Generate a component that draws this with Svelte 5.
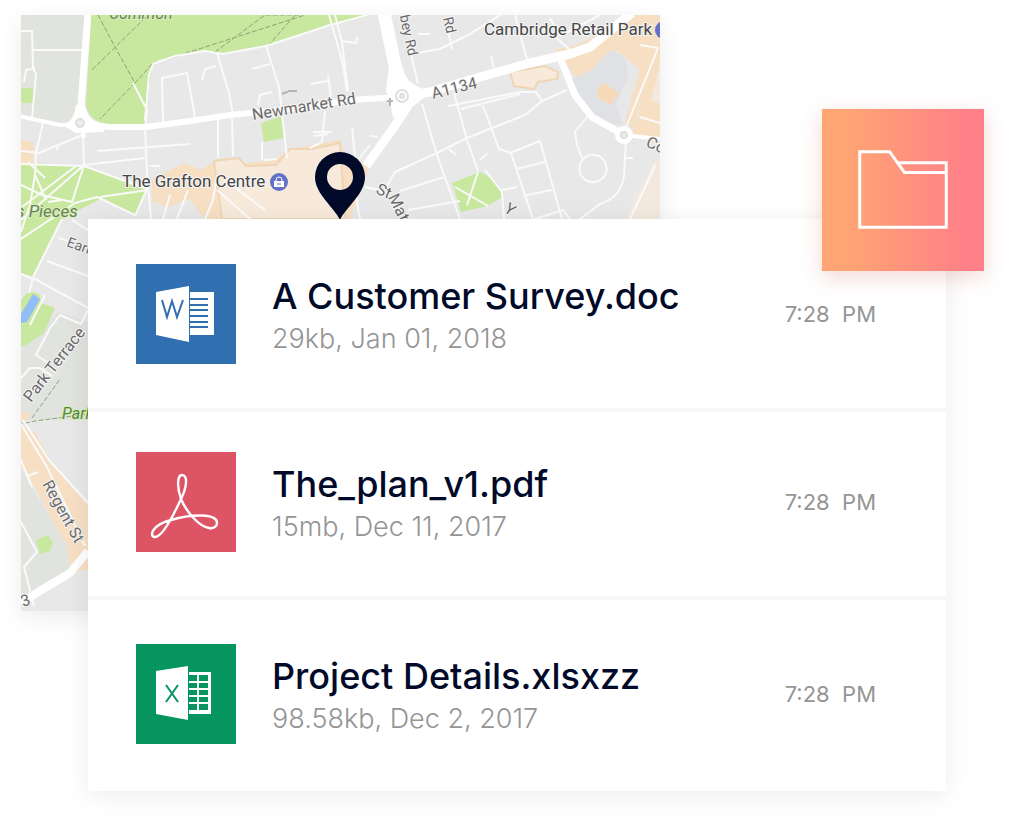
<script>
  const files = [
    { kind: 'word', name: 'A Customer Survey.doc', meta: '29kb, Jan 01, 2018', time: '7:28\u00a0 PM' },
    { kind: 'pdf', name: 'The_plan_v1.pdf', meta: '15mb, Dec 11, 2017', time: '7:28\u00a0 PM' },
    { kind: 'excel', name: 'Project Details.xlsxzz', meta: '98.58kb, Dec 2, 2017', time: '7:28\u00a0 PM' }
  ];
</script>

<main class="scene">
  <svg class="map" viewBox="21 15 639 596" preserveAspectRatio="xMinYMin slice" aria-label="Map">
    <rect x="21" y="15" width="639" height="596" fill="#e8e8e8" />
    <path fill="#e1e3df" d="M21 15H88L80 118 60 124 21 116ZM58 312 88 322V420H21V350ZM21 470 52 520 67 545 70 572 21 600Z" />

    <!-- parks -->
    <g fill="#c8e79f">
      <path d="M91 15 86 105Q88 121 108 124H146L148 90 152 68 158 60 200 51 223 54 265 47 330 25 373 15Z" />
      <path d="M21 88H33V103H21Z" />
      <path d="M21 162 84 166 147 189 135 215 102 198 62 219 33 277 21 273Z" />
      <path d="M261 123 281 116 284 138 264 142Z" />
      <path d="M452 183 480 172Q495 178 503 197L487 206 461 212Z" />
      <path d="M21 300Q30 287 40 295L41 303 55 308 44 333 21 348Z" />
      <path d="M36 540 48 535 53 543 50 551 40 554Z" />
    </g>
    <path fill="#93bdf6" d="M33 294 40 299 27 322 21 323V314Z" />

    <!-- commercial areas -->
    <g fill="#f6dfc3">
      <path d="M21 140 34 142 33 163H21Z" />
      <path d="M152 180 170 170 185 163 200 170 216 161 225 158 245 163 275 160 290 149 340 140 345 158 370 165 350 219H205L190 199 168 207 152 201Z" />
      <path d="M555 50 580 44 630 15H660V145L632 133 640 110 655 55 640 44 625 40 590 55 566 64Z" />
      <path d="M563 60 600 47 632 38 656 48 650 80 632 129 625 122 640 70 617 50 578 80Z" />
      <path d="M21 425 36 433 50 461 74 490 88 505V570L70 572 67 545 52 520 35 487 21 466Z" />
      <path d="M21 411 31 414 26 422H21Z" />
    </g>
    <g fill="#f7eadb" stroke="#efd5b4" stroke-width="2">
      <path d="M214 161 239 158 246 166 276 165 290 149 312 149 340 143 345 219H222Z" />
      <path d="M510 72 545 66 558 72 557 79 538 82 534 89 514 86Z" />
    </g>
    <path fill="#f3e9de" d="M660 155 650 168 625 219H660ZM660 65 651 100 660 104Z" />
    <path fill="#dfe1e5" d="M570 80 592 70 610 50 625 57 629 75 616 104 622 124 608 124 594 118 582 106Z" />
    <path fill="#f6d9b8" d="M598 87 604 83 619 93 611 105 597 97Z" />

    <g class="dash">
      <path d="M98 15 114 45 135 83 100 119M152 64 305 15M92 70 148 15M152 64 135 83M215 52 265 15H300M268 46 295 15M18 425 35 421 88 414M32 418 60 379" />
    </g>

    <!-- minor streets -->
    <g class="road minor">
      <path d="M21 31H32L33 68 36 74 32 118M24 82 26 70 35 68M33 50H82M21 151 39 153 85 134M43 123 36 153 35 175 46 200M83 134 84 165M21 164 84 166 147 189 135 216M60 143 56 150" />
      <path d="M84 165 21 220M76 166 22 207M45 178 28 162M84 165 72 202 42 195 21 185M21 239 75 203 97 197 135 215M48 202 62 200M35 175 30 205 21 232M100 197 148 190" />
      <path d="M133 83 147 110 145 128 147 172 151 219M145 120 149 75 153 64 175 56 205 51 223 54 266 46 330 25 375 13M163 123 162 78 187 73 195 117M202 80 205 69 216 66M205 51 217 53 229 93 233 115M97 151 190 144M84 165 145 158" />
      <path d="M218 116V158M232 116 233 156M258 105 260 95 272 92M262 142V160M252 69 270 64M266 46 279 87 287 158M264 160 277 159M328 75 332 105 325 108M325 111 322 142 310 148M313 132H332M314 136 328 134M311 84 328 81M329 15 342 60 347 91" />
      <path d="M335 15 342 42 348 91M342 41 356 43 357 37M410 50 418 84M412 54 440 49 470 34 500 15M448 30 452 49M418 34H430M515 15 527 60M491 56 494 68M545 27 572 52M550 18 560 36M560 36 600 15" />
      <path d="M422 104 437 155 460 219M454 93 467 140 478 171M448 106 520 92 536 92 542 101M461 109 520 94M542 101 567 90M483 106 499 149 511 153 533 219M542 101 525 115 467 138 437 153 395 172 384 191M510 153 540 141 562 219M516 169 545 162M523 196 552 190M485 170 502 192 504 219M478 172 467 205M455 187 488 206M502 190 517 187M400 191 444 177M408 210 460 201M365 187 384 191M355 190 360 219M352 127 355 158M370 136 378 137M449 149 456 155M480 160 488 153" />
      <path d="M587 117 575 132 577 145 583 160M605 162A12 12 0 1 1 581 175 12 12 0 0 1 605 162M626 140 624 175Q622 197 600 204L580 219M626 158H633M625 130 658 48 640 45M640 117 660 123M630 219 646 185 655 165M535 219 563 210 570 219" />
      <path d="M205 219 213 200 217 175M217 190 250 219M225 180 265 210M188 190 177 219M170 195 163 219M150 166H160M370 145 354 165" />
      <path d="M62 219 33 277M35 279 88 308M21 274 36 280M47 261 88 276M59 238 68 241M33 278 29 293M45 295 30 325M88 310 81 324 60 315 50 328 36 355 47 362 54 372M21 378 30 368 40 368 52 376" />
      <path d="M21 424 47 467 85 546M23 420 49 460 88 503M21 460 32 487M28 476 38 472M21 522 37 552 24 567 34 606M72 220 88 230" />
    </g>

    <!-- main roads -->
    <g class="road">
      <path stroke-width="7" d="M88 13 80 118" />
      <path stroke-width="4" d="M19 116 60 125 80 125M80 118 84 138" />
      <path stroke-width="6" d="M80 124 110 127 146 127 190 121 230 115 300 108 350 100 400 97" />
      <path stroke-width="13" d="M384 13 396 70 404 96" />
      <path stroke-width="9" d="M404 96 430 92 480 77 530 63 570 54 590 47 617 25 632 13" />
      <path stroke-width="9" d="M413 98 394 127 366 166" />
      <path stroke-width="7" d="M561 60 575 95 592 117 624 135" />
      <path stroke-width="4" d="M624 135 660 139" />
      <path stroke-width="8" d="M21 604 38 592 70 573 88 551" />
    </g>
    <g fill="#fff">
      <path d="M76 105H85Q87 121 104 124L104 132 76 133 62 125Q74 122 76 105Z" />
      <path d="M389 66 403 67Q405 82 421 88L426 96 411 108 393 118 390 102 386 91Z" />
      <circle cx="624" cy="135" r="9" />
    </g>
    <g fill="#ececec" stroke="#dedede" stroke-width="2">
      <circle cx="80" cy="123" r="4" />
      <circle cx="402" cy="96" r="6" fill="#fff" />
      <circle cx="402" cy="96" r="2" />
      <circle cx="624" cy="135" r="3" />
    </g>
    <path d="M390 106V98M387 101H393M282 94 289 91M288 91H297" stroke="#b3b3bb" stroke-width="2" fill="none" />

    <g class="label">
      <text x="484" y="35" class="place">Cambridge Retail Park</text>
      <text x="122" y="187" class="place">The Grafton Centre</text>
      <text transform="translate(253 120) rotate(-9)">Newmarket Rd</text>
      <text transform="translate(433 99) rotate(-14)">A1134</text>
      <text transform="translate(398 8) rotate(78)" class="small">bbey Rd</text>
      <text transform="translate(441 8) rotate(78)" class="small">y Rd</text>
      <text transform="translate(375 193) rotate(24)">St</text>
      <text transform="translate(388 197) rotate(64)">Mat</text>
      <text transform="translate(503 211) rotate(35)">Y</text>
      <text transform="translate(645 146) rotate(24)">Co</text>
      <text transform="translate(66 246) rotate(20)" class="small">Earl</text>
      <text transform="translate(31 403) rotate(-52)">Park Terrace</text>
      <text transform="translate(42 484) rotate(61)">Regent St</text>
      <text transform="translate(23 607) rotate(-20)">3</text>
      <text x="109" y="19" class="park">Common</text>
      <text x="16" y="217" class="park wide">s Pieces</text>
      <text x="62" y="419" class="park deep">Park</text>
    </g>

    <g>
      <circle cx="279" cy="182" r="9" fill="#6570c9" />
      <path d="M274 181H284V187H274Z" fill="#fff" />
      <path d="M276 182V180A3 3 0 0 1 282 180V182" fill="none" stroke="#fff" />
      <path d="M277 184H281" stroke="#6570c9" />
      <circle cx="664" cy="30" r="9" fill="#6570c9" />
    </g>

    <path fill="#020a2a" fill-rule="evenodd" d="M340 220C334 207 315 194 315 177A25 25 0 0 1 365 177C365 194 346 207 340 220ZM340 164A13 13 0 1 0 340 190 13 13 0 0 0 340 164Z" />
  </svg>

  <section class="card">
    <ul>
      {#each files as file}
        <li>
          <svg class="icon" viewBox="0 0 100 100" aria-hidden="true">
            {#if file.kind === 'word'}
              <rect width="100" height="100" fill="#306fb0" />
              <path fill="#fff" d="M20 28 53 22V78L20 71ZM54 28H78V71H54Z" />
              <path d="M54 35H72M54 41H72M54 46H72M54 52H72M54 58H72M54 63H72" stroke="#306fb0" stroke-width="2" />
              <path d="M26 36 31 53 36 37 41 53 47 36" fill="none" stroke="#306fb0" stroke-width="2" />
            {:else if file.kind === 'pdf'}
              <rect width="100" height="100" fill="#dd5565" />
              <path d="M45 47C41 36 41 23 46 23 52 23 51 35 45 47 39 60 27 85 19 85 13 85 15 73 35 68 55 62 81 61 81 71 81 74 78 77 73 76 62 74 50 59 45 47Z" fill="none" stroke="#fff" stroke-width="2.4" stroke-linejoin="round" />
            {:else}
              <rect width="100" height="100" fill="#06955e" />
              <path fill="#fff" d="M20 27 52 22V76L20 70ZM53 28H75V70H53Z" />
              <path fill="#06955e" d="M53 31H61V37H53ZM63 31H72V37H63ZM53 39H61V44H53ZM63 39H72V44H63ZM53 46H61V51H53ZM63 46H72V51H63ZM53 53H61V58H53ZM63 53H72V58H63ZM53 60H61V66H53ZM63 60H72V66H63Z" />
              <path d="M30 41 42 58M42 41 30 58" stroke="#06955e" stroke-width="2" />
            {/if}
          </svg>
          <div class="info">
            <h2>{file.name}</h2>
            <p>{file.meta}</p>
          </div>
          <time>{file.time}</time>
        </li>
      {/each}
    </ul>
    <button class="folder" type="button" aria-label="Folder">
      <svg viewBox="0 0 163 163" aria-hidden="true">
        <path d="M38 43H68L83 64H125V119H38ZM76 54H125V65" fill="none" stroke="#fff" stroke-width="3" />
      </svg>
    </button>
  </section>
</main>

<style>
  :global(body) {
    background: #fff;
  }

  .scene {
    position: relative;
    padding: 219px 78px 27px 88px;
    overflow: hidden;
    font-family: Inter, 'Liberation Sans', sans-serif;
  }

  .map {
    position: absolute;
    top: 15px;
    left: 21px;
    width: calc(100% - 385px);
    height: 596px;
    box-shadow: 0 6px 22px rgba(0, 0, 0, 0.08);
  }

  .road {
    fill: none;
    stroke: #fff;
    stroke-linejoin: round;
  }

  .minor {
    stroke: #fafafa;
    stroke-width: 2;
  }

  .dash {
    fill: none;
    stroke: #8fa377;
    stroke-width: 1;
    stroke-dasharray: 5 2;
  }

  .label {
    font-family: Roboto, sans-serif;
    font-size: 16px;
    fill: #6a6a6a;
    stroke: #f5f5f5;
    stroke-width: 2px;
    paint-order: stroke;
  }

  .label .place {
    font-size: 17px;
    fill: #454545;
  }

  .label .small {
    font-size: 14px;
  }

  .label .park {
    font-style: italic;
    fill: #68805a;
    stroke: #d8efb8;
  }

  .label .wide {
    font-size: 17px;
  }

  .label .deep {
    fill: #55883a;
  }

  .card {
    position: relative;
    background: #fff;
    box-shadow: 0 4px 24px rgba(0, 0, 0, 0.08);
  }

  ul {
    margin: 0;
    padding: 0;
    list-style: none;
  }

  li {
    display: flex;
    align-items: center;
    gap: 36px;
    padding: 40px 70px 44px 48px;
    border-bottom: 4px solid #f7f7f7;
  }

  li:first-child {
    padding-top: 45px;
  }

  li:last-child {
    padding-top: 44px;
    padding-bottom: 47px;
    border-bottom: 0;
  }

  .icon {
    flex: none;
    width: 100px;
    height: 100px;
  }

  .info {
    flex: 1;
    min-width: 0;
    padding-top: 6px;
  }

  h2,
  p {
    margin: 0;
  }

  h2 {
    font-size: 36px;
    line-height: 44px;
    font-weight: 500;
    color: #020a2a;
  }

  p {
    font-size: 27px;
    line-height: 42px;
    font-weight: 300;
    color: #959595;
  }

  time {
    font-size: 22px;
    line-height: 30px;
    color: #959595;
    white-space: nowrap;
  }

  .folder {
    position: absolute;
    top: -110px;
    right: -38px;
    width: 162px;
    height: 162px;
    padding: 0;
    border: 0;
    background: linear-gradient(90deg, #ffa573 15%, #ff8088 90%);
    box-shadow: 0 6px 20px rgba(200, 90, 70, 0.24);
  }

  .folder svg {
    display: block;
  }
</style>
